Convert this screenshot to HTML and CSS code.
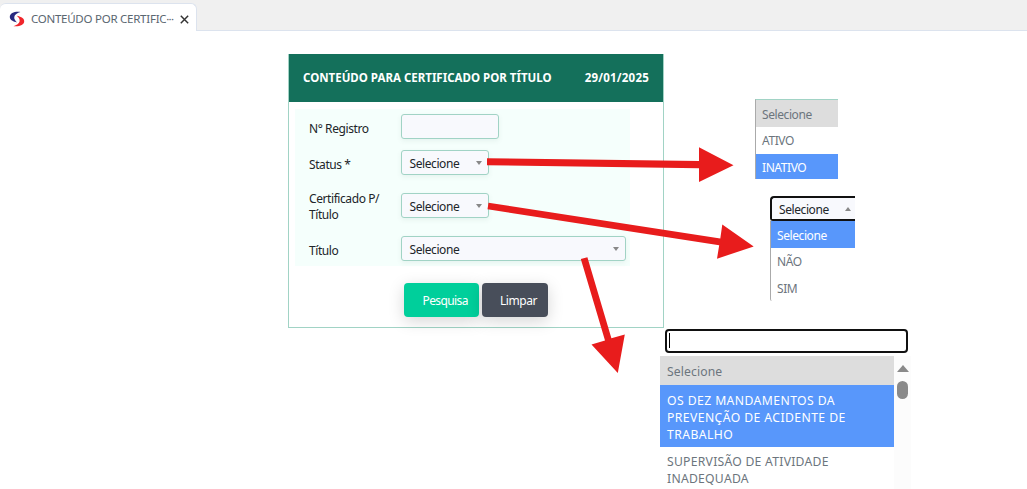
FILE: index.html
```html
<!DOCTYPE html>
<html lang="pt-BR">
<head>
<meta charset="utf-8">
<title>Conteúdo por Certificado</title>
<link rel="stylesheet" href="styles.css">
</head>
<body>
<header class="tabs">
  <div class="tab">
    <svg class="logo" width="16" height="16" viewBox="0 0 16 16">
      <path d="M11.500 1C6 .2.800 2.200.800 6 .800 9.200 4.500 10.600 8.200 11.400 6.300 9.600 5 8 5.300 5.900 5.600 3.600 8.500 1.900 11.500 1Z" fill="#29297f"/>
      <path d="M4.500 15.200C10 16 15.300 14 15.300 10.200 15.300 7 11.500 5.600 7.800 4.800c1.900 1.800 3.200 3.400 2.900 5.500-.3 2.300-3.200 4-6.200 4.900Z" fill="#f0252b"/>
    </svg>
    <span class="tab-title">CONTEÚDO POR CERTIFIC<span class="dots">···</span></span>
    <svg class="close" width="9" height="9" viewBox="0 0 8 8"><path d="M.7.7l6.6 6.6M7.3.7L.7 7.3" stroke="#333" stroke-width="1.3"/></svg>
  </div>
</header>
<main class="panel">
  <div class="panel-head"><span class="panel-title">CONTEÚDO PARA CERTIFICADO POR TÍTULO</span><span class="panel-date">29/01/2025</span></div>
  <form class="fields">
    <div class="row"><label>N° Registro</label><div class="control registro"></div></div>
    <div class="row"><label>Status *</label><div class="control short"><span>Selecione</span><i class="caret"></i></div></div>
    <div class="row tall"><label>Certificado P/<br>Título</label><div class="control short"><span>Selecione</span><i class="caret"></i></div></div>
    <div class="row"><label>Título</label><div class="control wide"><span>Selecione</span><i class="caret"></i></div></div>
  </form>
  <div class="actions"><div class="btn search">Pesquisa</div><div class="btn clear">Limpar</div></div>
</main>

<div class="menu menu-status">
  <div class="option muted">Selecione</div>
  <div class="option">ATIVO</div>
  <div class="option active">INATIVO</div>
</div>

<div class="menu menu-cert">
  <div class="opened"><span>Selecione</span><i class="caret up"></i></div>
  <div class="list">
    <div class="option active">Selecione</div>
    <div class="option">NÃO</div>
    <div class="option">SIM</div>
  </div>
</div>

<div class="menu menu-title">
  <div class="search-box"><i class="cursor"></i></div>
  <div class="results">
    <div class="list">
      <div class="option muted">Selecione</div>
      <div class="option active">OS DEZ MANDAMENTOS DA<br>PREVENÇÃO DE ACIDENTE DE<br>TRABALHO</div>
      <div class="option last">SUPERVISÃO DE ATIVIDADE<br>INADEQUADA</div>
    </div>
    <div class="scrollbar"><i class="scroll-up"></i><i class="thumb"></i></div>
  </div>
</div>

<svg class="arrows" width="1027" height="489" viewBox="0 0 1027 489" fill="#e81c1c">
  <path d="M487 158.300L699 161V147.300L733.500 165.200 699 182V168.200L487 165.300Z"/>
  <path d="M488.500 202.700L720.300 238.500 722.300 224.500 753.700 246.500 717 258.700 719.200 245.200 487.500 209.300Z"/>
  <path d="M580.800 259L587.400 257.200 611.400 338.300 624.800 334.500 617.800 373 591.500 344.500 605 340.400Z"/>
</svg>
</body>
</html>
```
FILE: styles.css
```css
* { box-sizing: border-box; }
body {
  margin: 0;
  width: 1027px;
  height: 489px;
  overflow: hidden;
  position: relative;
  background: #fff;
  color: #212529;
  font: 12px/16px "Noto Sans", "Open Sans", sans-serif;
  letter-spacing: -0.42px;
}
.tabs {
  height: 31px;
  padding-top: 3px;
  background: #f0f0f0;
  border-bottom: 1px solid #dce3ee;
}
.tab {
  display: flex;
  align-items: center;
  width: 197px;
  height: 28px;
  padding: 3px 7px 0 9px;
  background: #fff;
  border: 1px solid #dce3ee;
  border-left: 0;
  border-bottom: 0;
  border-radius: 6px 6px 0 0;
}
.tab-title { width: 144px; margin-left: 6px; white-space: nowrap; color: #5a6670; font-size: 11.5px; letter-spacing: -0.25px; }
.dots { letter-spacing: -0.8px; }
.close { margin-left: 6px; }
.panel {
  width: 376px;
  height: 274px;
  margin: 23px 0 0 288px;
  border: 1px solid #a1d3c5;
  border-top: 0;
}
.panel-head {
  display: flex;
  justify-content: space-between;
  align-items: center;
  height: 48px;
  padding: 0 14px;
  background: #14705b;
  color: #fff;
  font-size: 11.5px;
  font-weight: 700;
  white-space: nowrap;
}
.panel-title { letter-spacing: 0; }
.panel-date { letter-spacing: 0.22px; }
.fields {
  display: flex;
  flex-direction: column;
  gap: 11px;
  width: 335px;
  height: 157px;
  margin: 7px 0 0 6px;
  padding: 5px 0 5px 13px;
  background: #f5fffc;
}
.row {
  display: grid;
  grid-template-columns: 93px 1fr;
  align-items: center;
  height: 25px;
}
.row label { padding: 4px 0 0 1px; }
.row.tall { height: 39px; }
.row.tall label { padding-top: 3px; }
.control {
  display: flex;
  align-items: center;
  justify-content: space-between;
  height: 25px;
  padding: 3px 6px 0 7.5px;
  background: #f8f9fd;
  border: 1px solid #a1d3c5;
  border-radius: 3px;
  box-shadow: 0 2px 5px rgba(60, 100, 90, .08);
}
.registro { width: 98px; }
.short { width: 88px; }
.wide { width: 225px; }
.caret {
  border: 3px solid transparent;
  border-top: 4px solid #888;
  border-bottom: 0;
  margin-top: -3px;
}
.caret.up { border-top: 0; border-bottom: 4px solid #888; }
.actions { display: flex; gap: 3px; margin: 17px 0 0 115px; }
.btn {
  height: 34px;
  padding-top: 10px;
  border-radius: 4px;
  color: #fff;
  box-shadow: 0 4px 16px rgba(0, 0, 0, .17);
}
.search { width: 75px; padding-left: 18.5px; letter-spacing: -0.6px; background: #00cf9b; }
.clear { width: 66px; padding-left: 18px; background: #484e5a; }
.menu { position: absolute; color: #6c757d; }
.option { padding: 5px 7px; white-space: nowrap; }
.muted { background: #ddd; }
.active { background: #5897fb; color: #fff; }
.menu-status {
  left: 755px;
  top: 99px;
  width: 83px;
  border-left: 1px solid #aaa;
  border-top: 1px solid #a1d3c5;
}
.menu-status .option { height: 27px; padding: 7px 6px 2px; }
.menu-status .option + .option { height: 27px; padding-top: 6px; }
.menu-status .option + .active { height: 25px; padding-top: 6px; }
.menu-cert { left: 770px; top: 196px; width: 85px; }
.opened {
  display: flex;
  align-items: center;
  justify-content: space-between;
  height: 25px;
  padding: 3px 4px 0 7px;
  background: #f8f9fd;
  border: 2px solid #111;
  border-right: 0;
  border-radius: 4px 0 0 3px;
  color: #212529;
}
.menu-cert .list { height: 80px; border-left: 1px solid #aaa; border-radius: 0 0 0 2px; }
.menu-cert .option { height: 27px; padding: 7px 6px 4px; }
.menu-cert .option + .option { padding-top: 6px; }
.menu-title { left: 660px; top: 329px; width: 251px; height: 160px; overflow: hidden; }
.search-box {
  width: 243px;
  height: 24px;
  margin: 0 0 3px 5px;
  padding: 2px;
  border: 2px solid #111;
  border-radius: 4px;
}
.cursor { display: block; width: 1px; height: 15px; background: #000; }
.results { display: flex; height: 133px; }
.results .list { width: 234px; font-size: 12.2px; line-height: 17px; letter-spacing: 0.42px; }
.results .option { padding: 7px; }
.results .muted { height: 29px; letter-spacing: 0.1px; }
.results .active { height: 62px; }
.results .last { padding-top: 6px; letter-spacing: 0.25px; }
.scrollbar {
  display: flex;
  flex-direction: column;
  align-items: center;
  gap: 9px;
  width: 17px;
  padding-top: 9px;
  background: #fcfcfc;
}
.scroll-up { border: 6px solid transparent; border-top: 0; border-bottom: 7px solid #8a8a8a; }
.thumb { width: 11px; height: 18px; border-radius: 6px; background: #8a8a8a; }
.arrows { position: absolute; left: 0; top: 0; }
```
